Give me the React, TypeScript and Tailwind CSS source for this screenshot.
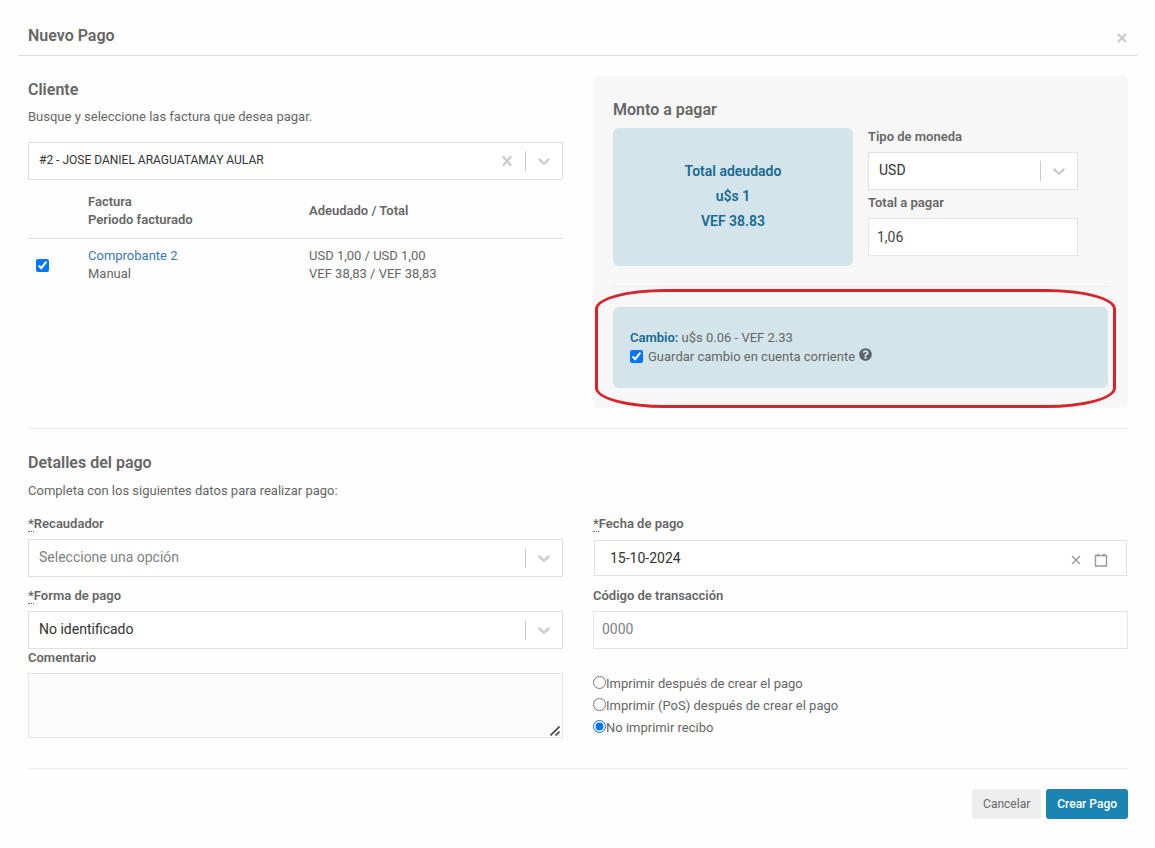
import { useState } from "react";
import type { ReactNode, SelectHTMLAttributes } from "react";
import { clsx } from "clsx";
import { FaQuestionCircle } from "react-icons/fa";

const ChevronIcon = () => (
  <svg viewBox="0 0 20 20" className="h-5 w-5 fill-current" aria-hidden="true">
    <path d="M4.516 7.548c0.436-0.446 1.043-0.481 1.576 0l3.908 3.747 3.908-3.747c0.533-0.481 1.141-0.446 1.574 0 0.436 0.445 0.408 1.197 0 1.615-0.406 0.418-4.695 4.502-4.695 4.502-0.217 0.223-0.502 0.335-0.787 0.335s-0.57-0.112-0.789-0.335c0 0-4.287-4.084-4.695-4.502s-0.436-1.17 0-1.615z" />
  </svg>
);

const CrossIcon = () => (
  <svg viewBox="0 0 20 20" className="h-5 w-5 fill-current" aria-hidden="true">
    <path d="M14.348 14.849c-0.469 0.469-1.229 0.469-1.697 0l-2.651-3.030-2.651 3.029c-0.469 0.469-1.229 0.469-1.697 0-0.469-0.469-0.469-1.229 0-1.697l2.758-3.15-2.759-3.152c-0.469-0.469-0.469-1.228 0-1.697s1.228-0.469 1.697 0l2.652 3.031 2.651-3.031c0.469-0.469 1.228-0.469 1.697 0s0.469 1.229 0 1.697l-2.758 3.152 2.758 3.15c0.469 0.469 0.469 1.229 0 1.698z" />
  </svg>
);

const CloseIcon = () => (
  <svg viewBox="0 0 10 10" className="h-[10px] w-[10px]" fill="none" stroke="currentColor" strokeWidth="2.2" aria-hidden="true">
    <path d="M1 1l8 8M9 1l-8 8" />
  </svg>
);

const ThinCrossIcon = () => (
  <svg viewBox="0 0 10 10" className="h-[10px] w-[10px]" fill="none" stroke="currentColor" strokeWidth="1.4" aria-hidden="true">
    <path d="M1 1l8 8M9 1l-8 8" />
  </svg>
);

const CalendarIcon = () => (
  <svg viewBox="0 0 14 14" className="h-[14px] w-[14px]" fill="none" stroke="currentColor" strokeWidth="1.4" aria-hidden="true">
    <path d="M1 2.5h12M1.5 2v11.5M12.5 2v11.5M1 13h12" />
    <path d="M4 0.5v3M10 0.5v3" />
  </svg>
);

const ResizeGrip = () => (
  <svg
    viewBox="0 0 10 10"
    className="pointer-events-none absolute right-[3px] bottom-[2px] h-[10px] w-[10px]"
    fill="none"
    stroke="#444"
    strokeWidth="1.6"
    aria-hidden="true"
  >
    <path d="M0.5 9.5l9-9M5.5 9.5l4-4" />
  </svg>
);

interface SelectProps extends SelectHTMLAttributes<HTMLSelectElement> {
  small?: boolean;
  muted?: boolean;
  onClear?: () => void;
}

const Select = ({ small, muted, onClear, children, ...props }: SelectProps) => (
  <div className="relative">
    <select
      className={clsx(
        "block h-[38px] w-full appearance-none border border-[#e0e0e0] bg-white pb-[2px] pl-[10px] pr-12",
        small ? "text-xs" : "text-sm",
        muted ? "text-[#808080]" : "text-[#333]"
      )}
      {...props}
    >
      {children}
    </select>
    <div className="pointer-events-none absolute inset-y-[9px] right-[9px] flex items-center gap-2 text-[#ccc]">
      {onClear && (
        <button type="button" aria-label="Limpiar" onClick={onClear} className="pointer-events-auto">
          <CrossIcon />
        </button>
      )}
      <span className="h-5 w-px bg-[#ccc]" />
      <ChevronIcon />
    </div>
  </div>
);

interface LabelProps {
  htmlFor: string;
  required?: boolean;
  children: ReactNode;
}

const Label = ({ htmlFor, required, children }: LabelProps) => (
  <label htmlFor={htmlFor} className="mb-[6px] block leading-[18px] font-semibold">
    {required && <abbr title="obligatorio" className="border-b border-dotted border-[#666] no-underline">*</abbr>}
    {children}
  </label>
);

const printOptions = [
  { id: "print", label: "Imprimir después de crear el pago" },
  { id: "print-pos", label: "Imprimir (PoS) después de crear el pago" },
  { id: "no-print", label: "No imprimir recibo" },
];

export default function App() {
  const [client, setClient] = useState("2");
  const [printMode, setPrintMode] = useState("no-print");
  const [date, setDate] = useState("15-10-2024");

  return (
    <div className="min-h-screen bg-[#fefefe] pt-[26px] pr-[17px] pb-7 pl-[18px] font-['Roboto',sans-serif] text-[13px] text-[#666]">
      <header className="flex justify-between border-b border-[#ddd] px-[10px] pb-[9px]">
        <h1 className="text-base leading-5 font-semibold">Nuevo Pago</h1>
        <button type="button" aria-label="Cerrar" className="px-px pt-1 text-[#c8c8c8]">
          <CloseIcon />
        </button>
      </header>

      <form className="px-[10px]" onSubmit={(e) => e.preventDefault()}>
        <div className="mt-5 grid grid-cols-2 gap-[30px]">
          {/* Client and invoices */}
          <section className="pt-1">
            <h2 className="text-base leading-5 font-semibold">Cliente</h2>
            <p className="mt-[7px] mb-[15px] leading-5">Busque y seleccione las factura que desea pagar.</p>
            <Select small aria-label="Cliente" value={client} onChange={(e) => setClient(e.target.value)} onClear={() => setClient("")}>
              <option value="" />
              <option value="2">#2 - JOSE DANIEL ARAGUATAMAY AULAR</option>
            </Select>

            <table className="mt-[5px] w-full table-fixed text-left leading-[18px]">
              <thead>
                <tr className="border-b border-[#ddd]">
                  <th className="w-[52px]" />
                  <th className="w-[221px] px-2 pt-2 pb-[9px] font-semibold">
                    Factura
                    <br />
                    Periodo facturado
                  </th>
                  <th className="px-2 pb-[2px] font-semibold">Adeudado / Total</th>
                </tr>
              </thead>
              <tbody>
                <tr>
                  <td className="p-2">
                    <input type="checkbox" defaultChecked aria-label="Comprobante 2" className="block h-[13px] w-[13px]" />
                  </td>
                  <td className="p-2">
                    <a href="#comprobante-2" className="text-[#3d77ad]">Comprobante 2</a>
                    <br />
                    Manual
                  </td>
                  <td className="p-2">
                    USD 1,00 / USD 1,00
                    <br />
                    VEF 38,83 / VEF 38,83
                  </td>
                </tr>
              </tbody>
            </table>
          </section>

          {/* Amount */}
          <section className="rounded-md bg-[#f7f7f7] px-5 pt-6 pb-5">
            <h2 className="mb-2 text-base leading-5 font-semibold">Monto a pagar</h2>
            <div className="grid grid-cols-[16fr_14fr_1fr] gap-[15px]">
              <div className="rounded-md bg-[#d3e4ea] pt-[31px] pb-8 text-center text-sm leading-[25px] font-semibold text-[#186a95]">
                <p>Total adeudado</p>
                <p>u$s 1</p>
                <p>VEF 38.83</p>
              </div>
              <div>
                <Label htmlFor="currency">Tipo de moneda</Label>
                <Select id="currency" defaultValue="USD">
                  <option>USD</option>
                  <option>VEF</option>
                </Select>
                <div className="mt-1">
                  <Label htmlFor="total">Total a pagar</Label>
                  <input id="total" type="text" defaultValue="1,06" className="block h-[38px] w-full border border-[#e5e5e5] bg-white px-2 text-sm text-[#444]" />
                </div>
              </div>
            </div>

            <hr className="mt-5 mb-5 border-[#eee]" />

            <div className="relative rounded-md bg-[#d3e4ea] px-[17px] pt-[21px] pb-[22px] leading-[19px]">
              <p>
                <strong className="font-semibold text-[#186a95]">Cambio:</strong> u$s 0.06 - VEF 2.33
              </p>
              <div className="flex items-center">
                <input id="keep-change" type="checkbox" defaultChecked className="h-[13px] w-[13px]" />
                <label htmlFor="keep-change" className="ml-[5px]">Guardar cambio en cuenta corriente</label>
                <FaQuestionCircle className="mb-1 ml-1 h-[13px] w-[13px] text-[#5f6468]" />
              </div>
              {/* Highlight ring */}
              <div className="pointer-events-none absolute -top-[18px] -right-2 -bottom-5 -left-[18px] rounded-[70px/20px] border-3 border-[#d8232a]" />
            </div>
          </section>
        </div>

        <hr className="mt-5 mb-6 border-[#eee]" />

        <h2 className="text-base leading-5 font-semibold">Detalles del pago</h2>
        <p className="mt-2 mb-[14px] leading-5">Completa con los siguientes datos para realizar pago:</p>

        <div className="grid grid-cols-2 gap-[30px]">
          <div>
            <Label htmlFor="collector" required>Recaudador</Label>
            <Select id="collector" muted>
              <option>Seleccione una opción</option>
            </Select>
            <div className="mt-[10px]">
              <Label htmlFor="method" required>Forma de pago</Label>
              <Select id="method">
                <option>No identificado</option>
              </Select>
            </div>
            <Label htmlFor="comment">Comentario</Label>
            <div className="relative">
              <textarea id="comment" className="block h-[65px] w-full resize-none border border-[#e5e5e5] bg-[#fcfcfc] p-2 text-sm" />
              <ResizeGrip />
            </div>
          </div>

          <div>
            <Label htmlFor="date" required>Fecha de pago</Label>
            <div className="p-px">
              <div className="flex h-9 items-center border border-[#e0e0e0] bg-white pr-[18px] pl-[15px] text-[#999]">
                <input id="date" type="text" value={date} onChange={(e) => setDate(e.target.value)} className="min-w-0 flex-1 text-sm text-[#333] outline-none" />
                <button type="button" aria-label="Borrar fecha" className="pt-1" onClick={() => setDate("")}>
                  <ThinCrossIcon />
                </button>
                <button type="button" aria-label="Abrir calendario" className="ml-[13px] pt-[3px]">
                  <CalendarIcon />
                </button>
              </div>
            </div>
            <div className="mt-[10px]">
              <Label htmlFor="code">Código de transacción</Label>
              <input id="code" type="text" placeholder="0000" className="block h-[38px] w-full border border-[#e5e5e5] bg-white px-2 pb-[2px] text-sm placeholder:text-[#808080]" />
            </div>
            <div className="mt-6">
              {printOptions.map(({ id, label }) => (
                <div key={id} className="flex h-[22px] items-center">
                  <input id={id} type="radio" name="print" checked={printMode === id} onChange={() => setPrintMode(id)} className="mb-1 h-[13px] w-[13px]" />
                  <label htmlFor={id}>{label}</label>
                </div>
              ))}
            </div>
          </div>
        </div>

        <hr className="mt-[29px] mb-5 border-[#eee]" />

        <div className="flex justify-end gap-[5px] text-xs">
          <button type="button" className="h-[30px] rounded-[3px] bg-[#eee] px-[11px]">Cancelar</button>
          <button type="submit" className="h-[30px] rounded-[3px] bg-[#1c84b3] px-[11px] font-medium text-white">Crear Pago</button>
        </div>
      </form>
    </div>
  );
}
